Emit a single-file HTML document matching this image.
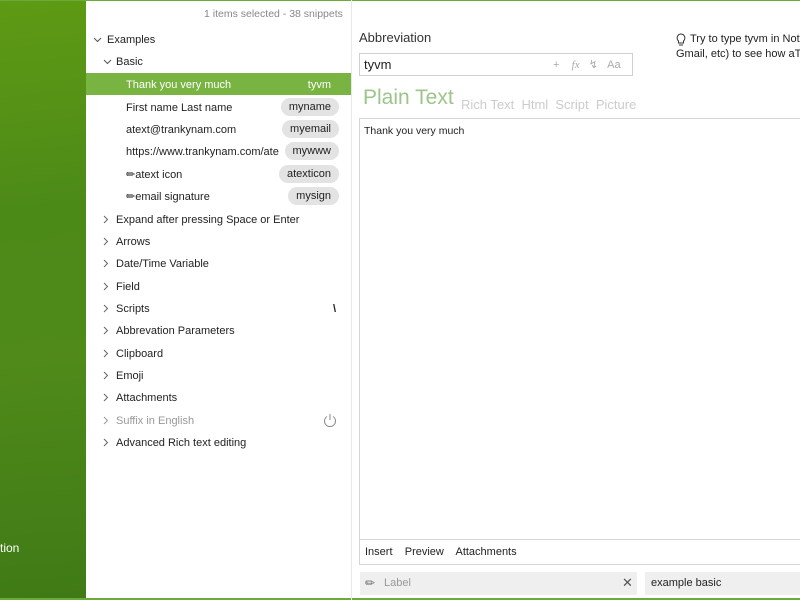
<!DOCTYPE html>
<html><head><style>
body{margin:0;width:800px;height:600px;overflow:hidden;font-family:"Liberation Sans",sans-serif;background:#fff;position:relative}
.abs{position:absolute}
#left{left:0;top:0;width:86px;height:600px;background:linear-gradient(175deg,#5f9a14 0%,#4c8a18 35%,#4f8a1a 60%,#3f7a16 100%)}
.row{position:absolute;left:86px;width:265px;height:22px;font-size:11px;color:#222;line-height:24px}
.pill{position:absolute;right:12px;top:2px;height:18px;line-height:18px;background:#e3e3e3;border-radius:9px;padding:0 8px;font-size:11px;color:#222}
.t{position:absolute;font-size:11px;color:#222;white-space:nowrap}
.ch{position:absolute;left:17px;top:7px}
</style></head><body>
<div id="left" class="abs"></div>
<div class="abs" style="left:0;top:0;width:800px;height:1px;background:#6aab3a"></div>
<div class="abs" style="left:0;top:598px;width:800px;height:2px;background:#6aab3a"></div>
<div class="abs" style="left:0;top:541px;color:#fff;font-size:12px">tion</div>
<div class="abs" style="left:351px;top:0;width:1px;height:600px;background:#e8e8e8"></div>
<div class="t" style="left:204px;top:8px;color:#888;font-size:10.5px">1 items selected - 38 snippets</div>

<svg class="abs" style="left:93px;top:37px" width="9" height="6"><path d="M1 1l3.5 3.5L8 1" fill="none" stroke="#555"/></svg>
<div class="t" style="left:107px;top:34px">Examples</div>
<svg class="abs" style="left:103px;top:59px" width="9" height="6"><path d="M1 1l3.5 3.5L8 1" fill="none" stroke="#555"/></svg>
<div class="t" style="left:116px;top:56px">Basic</div>

<div class="row" style="top:73px;background:#79b443;color:#fff"><span style="position:absolute;left:40px">Thank you very much</span><span class="pill" style="background:transparent;color:#fff;top:3px">tyvm</span></div>
<div class="row" style="top:96px"><span style="position:absolute;left:40px">First name Last name</span><span class="pill">myname</span></div>
<div class="row" style="top:118px"><span style="position:absolute;left:40px">atext@trankynam.com</span><span class="pill">myemail</span></div>
<div class="row" style="top:140px"><span style="position:absolute;left:40px">https://www.trankynam.com/ate</span><span class="pill">mywww</span></div>
<div class="row" style="top:163px"><span style="position:absolute;left:40px">&#9999;atext icon</span><span class="pill">atexticon</span></div>
<div class="row" style="top:185px"><span style="position:absolute;left:40px">&#9999;email signature</span><span class="pill">mysign</span></div>

<div class="row" style="top:208px"><svg class="ch" width="6" height="9"><path d="M1 1l3.5 3.5L1 8" fill="none" stroke="#666"/></svg><span style="position:absolute;left:30px">Expand after pressing Space or Enter</span></div>
<div class="row" style="top:230px"><svg class="ch" width="6" height="9"><path d="M1 1l3.5 3.5L1 8" fill="none" stroke="#666"/></svg><span style="position:absolute;left:30px">Arrows</span></div>
<div class="row" style="top:252px"><svg class="ch" width="6" height="9"><path d="M1 1l3.5 3.5L1 8" fill="none" stroke="#666"/></svg><span style="position:absolute;left:30px">Date/Time Variable</span></div>
<div class="row" style="top:275px"><svg class="ch" width="6" height="9"><path d="M1 1l3.5 3.5L1 8" fill="none" stroke="#666"/></svg><span style="position:absolute;left:30px">Field</span></div>
<div class="row" style="top:297px"><svg class="ch" width="6" height="9"><path d="M1 1l3.5 3.5L1 8" fill="none" stroke="#666"/></svg><span style="position:absolute;left:30px">Scripts</span><span style="position:absolute;left:247px;font-weight:bold">\</span></div>
<div class="row" style="top:319px"><svg class="ch" width="6" height="9"><path d="M1 1l3.5 3.5L1 8" fill="none" stroke="#666"/></svg><span style="position:absolute;left:30px">Abbrevation Parameters</span></div>
<div class="row" style="top:342px"><svg class="ch" width="6" height="9"><path d="M1 1l3.5 3.5L1 8" fill="none" stroke="#666"/></svg><span style="position:absolute;left:30px">Clipboard</span></div>
<div class="row" style="top:364px"><svg class="ch" width="6" height="9"><path d="M1 1l3.5 3.5L1 8" fill="none" stroke="#666"/></svg><span style="position:absolute;left:30px">Emoji</span></div>
<div class="row" style="top:386px"><svg class="ch" width="6" height="9"><path d="M1 1l3.5 3.5L1 8" fill="none" stroke="#666"/></svg><span style="position:absolute;left:30px">Attachments</span></div>
<div class="row" style="top:409px;color:#999"><svg class="ch" width="6" height="9"><path d="M1 1l3.5 3.5L1 8" fill="none" stroke="#999"/></svg><span style="position:absolute;left:30px">Suffix in English</span><svg style="position:absolute;left:237px;top:4px" width="14" height="14"><path d="M4 3.5A5.5 5.5 0 1 0 10 3.5M7 1v6" fill="none" stroke="#888"/></svg></div>
<div class="row" style="top:431px"><svg class="ch" width="6" height="9"><path d="M1 1l3.5 3.5L1 8" fill="none" stroke="#666"/></svg><span style="position:absolute;left:30px">Advanced Rich text editing</span></div>

<div class="t" style="left:359px;top:30px;font-size:13px;color:#333">Abbreviation</div>
<div class="abs" style="left:359px;top:53px;width:272px;height:21px;border:1px solid #d0d0d0"></div>
<div class="t" style="left:364px;top:57px;font-size:13px">tyvm</div>
<div class="t" style="left:553px;top:58px;color:#aaa;font-size:11px">+&nbsp;&nbsp;&nbsp;&nbsp;<i style="font-family:'Liberation Serif'">fx</i>&nbsp;&nbsp;&nbsp;&#8623;&nbsp;&nbsp;&nbsp;Aa</div>
<svg class="abs" style="left:676px;top:33px" width="10" height="13"><path d="M5 1a4 4 0 0 0-2.5 7V10h5V8A4 4 0 0 0 5 1zM3 12h4" fill="none" stroke="#333"/></svg>
<div class="t" style="left:690px;top:33px;font-size:11px">Try to type tyvm in Not</div>
<div class="t" style="left:676px;top:48px;font-size:11px">Gmail, etc) to see how aTe</div>
<div class="t" style="left:363px;top:86px;font-size:21px;color:#9cc58a">Plain Text</div>
<div class="t" style="left:461px;top:97px;font-size:13px;color:#ccc">Rich Text&nbsp;&nbsp;Html&nbsp;&nbsp;Script&nbsp;&nbsp;Picture</div>
<div class="abs" style="left:359px;top:118px;width:441px;height:445px;border:1px solid #d6d6d6;border-right:none"></div>
<div class="abs" style="left:360px;top:539px;width:440px;height:1px;background:#d6d6d6"></div>
<div class="t" style="left:364px;top:125px;font-size:10.5px">Thank you very much</div>
<div class="t" style="left:365px;top:546px;font-size:11px">Insert&nbsp;&nbsp;&nbsp; Preview&nbsp;&nbsp;&nbsp; Attachments</div>
<div class="abs" style="left:360px;top:572px;width:277px;height:23px;background:#efefef"></div>
<div class="t" style="left:365px;top:576px;font-size:12px;color:#666">&#9999;</div>
<div class="t" style="left:384px;top:577px;font-size:11px;color:#999">Label</div>
<div class="t" style="left:622px;top:575px;font-size:13px;color:#555">&#x2715;</div>
<div class="abs" style="left:645px;top:572px;width:155px;height:23px;background:#efefef"></div>
<div class="t" style="left:651px;top:577px;font-size:11px">example basic</div>
</body></html>
